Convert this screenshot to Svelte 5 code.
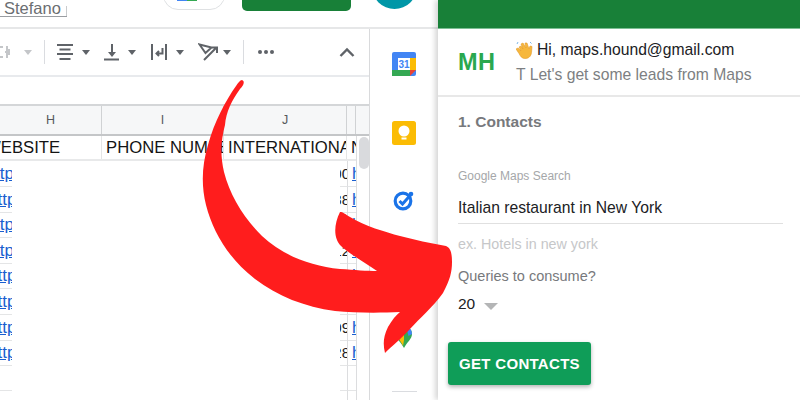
<script>
    const rows = [
        { skip: 14.5, num: '00', link: true },
        { skip: 12, num: '88', link: true },
        { skip: 14.5, num: '', link: true },
        { skip: 14.5, num: '12', link: true },
        { skip: 12, num: '', link: true },
        { skip: 12, num: '', link: true },
        { skip: 12, num: '09', link: true },
        { skip: 12, num: '28', link: true },
        { skip: 0, num: '', link: false },
        { skip: 0, num: '', link: false }
    ];
</script>

<div class="page">
    <div class="left">
        <!-- top bar of the sheet -->
        <div class="topbar">
            <span class="doc-name">Stefano</span>
            <div class="pill"></div>
            <div class="share"></div>
            <div class="avatar"></div>
        </div>

        <div class="work">
            <div class="sheet">
                <!-- toolbar -->
                <div class="toolbar">
                    <svg class="tool first" width="16" height="16" viewBox="0 0 16 16" fill="none" stroke="#c4c6c9" stroke-width="2">
                        <path d="M1 3h6M1 13h6M11 2v4h3M11 14v-4h3M9 8h5" />
                    </svg>
                    <i class="caret off"></i>
                    <i class="sep near"></i>
                    <svg class="tool" width="18" height="18" viewBox="0 0 18 18" fill="none" stroke="#5f6368" stroke-width="2">
                        <path d="M1 2h16M3.500 6.500h11M1 11h16M3.500 16h11" />
                    </svg>
                    <i class="caret"></i>
                    <svg class="tool" width="16" height="18" viewBox="0 0 16 18" fill="#5f6368">
                        <path d="M7 1h2v8h3l-4 5-4-5h3z" />
                        <rect y="15.500" width="15" height="2" />
                    </svg>
                    <i class="caret"></i>
                    <svg class="tool" width="18" height="18" viewBox="0 0 18 18" fill="none" stroke="#5f6368" stroke-width="2">
                        <path d="M2 1v16M16 1v16M12.500 5v5.500H7M9 8l-2.500 2.500L9 13" />
                    </svg>
                    <i class="caret"></i>
                    <svg class="tool" width="20" height="18" viewBox="0 0 20 18" fill="none" stroke="#5f6368" stroke-width="2">
                        <path d="M1.500 1.500l12 3-6 5.500zM6 17L18 5M13.500 4.500H19V10" />
                    </svg>
                    <i class="caret last"></i>
                    <i class="sep"></i>
                    <span class="dots"><i></i><i></i><i></i></span>
                    <svg class="chev" width="16" height="10" viewBox="0 0 16 10" fill="none" stroke="#5f6368" stroke-width="2.400">
                        <path d="M1.500 9L8 2.500 14.500 9" />
                    </svg>
                </div>

                <div class="formula"></div>

                <div class="col-heads">
                    <div class="head">H</div>
                    <div class="head">I</div>
                    <div class="head">J</div>
                    <div class="head"></div>
                    <div class="head"></div>
                </div>

                <div class="title-row">
                    <div class="t h"><span class="flip">WEBSITE</span></div>
                    <div class="t">PHONE NUMBE</div>
                    <div class="t">INTERNATIONA</div>
                    <div class="t k">N</div>
                </div>

                {#each rows as row}
                    <div class="row">
                        <div class="cell-link">
                            {#if row.link}
                                <span style="margin-left: {-row.skip}px">https://</span>
                            {/if}
                        </div>
                        <div class="cell-empty"></div>
                        <div class="cell-num"><span>{row.num}</span></div>
                        <div class="cell-h">{row.link ? 'h' : ''}</div>
                    </div>
                {/each}

                <div class="track">
                    <div class="thumb"></div>
                </div>
            </div>

            <!-- google side apps -->
            <div class="side">
                <svg class="calendar" width="24" height="24" viewBox="0 0 24 24">
                    <rect width="24" height="24" rx="2" fill="#4285f4" />
                    <rect x="6" y="6" width="12" height="12" fill="#fff" />
                    <rect x="18" y="6" width="6" height="12" fill="#fbbc04" />
                    <rect y="18" width="18" height="6" fill="#34a853" />
                    <path d="M18 18h6l-6 6z" fill="#ea4335" />
                    <text x="12" y="16" text-anchor="middle" class="cal">31</text>
                </svg>
                <svg class="keep" width="24" height="24" viewBox="0 0 24 24">
                    <rect width="24" height="24" rx="2.500" fill="#fbbc04" />
                    <circle cx="12" cy="10" r="5.500" fill="#fff" />
                    <rect x="9.500" y="16.500" width="5" height="2" fill="#fff" />
                </svg>
                <svg class="tasks" width="22" height="22" viewBox="0 0 22 22" fill="none">
                    <circle cx="10" cy="12" r="7.800" stroke="#1a73e8" stroke-width="3.200" />
                    <path d="M6.500 12l3 3L18 5.500" stroke="#1a73e8" stroke-width="3" />
                    <circle cx="18" cy="5" r="2.300" fill="#1a73e8" />
                </svg>
                <svg class="maps" width="16" height="22" viewBox="0 0 16 22">
                    <path d="M8 0a8 8 0 0 1 8 8c0 5-5 8-8 14-3-6-8-9-8-14a8 8 0 0 1 8-8z" fill="#34a853" />
                    <path d="M0 8a8 8 0 0 1 8-8l-8 10z" fill="#ea4335" />
                    <path d="M3 13l5-5v6l-1 6c-1-3-3-5-4-7z" fill="#fbbc04" />
                    <path d="M16 8l-3.500 2L11 4l2-2.500A8 8 0 0 1 16 8z" fill="#4285f4" />
                </svg>
                <i class="side-line"></i>
            </div>
        </div>
    </div>

    <!-- extension panel -->
    <div class="panel">
        <div class="panel-head"></div>

        <div class="user">
            <div class="initials">MH</div>
            <div class="greet">
                <div class="hi">
                    <svg width="17" height="18" viewBox="0 0 17 18">
                        <path d="M3 6l2-1 2 3-2-5 2-1 3 5-1-5 2 0 2 6 1-3 2 .500-.500 6c-.500 4-3 6-6.500 6-3 0-4.500-2-6-5L0 8l2-1 3 3z" fill="#f6b73c" stroke="#e49a2b" stroke-width=".600" />
                        <path d="M1 3l1-2M14 1l1.500 1.500" stroke="#7bb6e8" stroke-width="1" />
                    </svg>
                    <span>Hi, maps.hound@gmail.com</span>
                </div>
                <div class="tagline">T Let's get some leads from Maps</div>
            </div>
        </div>

        <div class="body">
            <h2>1. Contacts</h2>
            <div class="field-label">Google Maps Search</div>
            <div class="field-value">Italian restaurant in New York</div>
            <div class="hint">ex. Hotels in new york</div>
            <div class="queries">Queries to consume?</div>
            <div class="select"><span>20</span><i></i></div>
            <button>GET CONTACTS</button>
        </div>
    </div>

    <!-- big red arrow over the screenshot -->
    <svg class="arrow" width="800" height="400" viewBox="0 0 800 400">
        <path
            fill="#ff1d1d"
            d="M242 80 C245 81 244 85 240 89 C232 100 226 112 225 125 C221 140 220 155 224 172 C230 195 243 217 262 236 C282 255 310 266 340 269 C355 270 367 271 377 271 C365 263 350 254 341 246 C333 238 334 224 340 212 C343 212 345 214 350 217 C365 226 385 232 400 236 C415 240 430 243 446 246 C451 248 452 254 452 262 C452 272 450 280 443 293 C432 308 420 318 410 329 C402 338 392 346 385 353 C383 345 383 337 388 327 C392 320 396 315 400 312 C380 313 355 313 335 311 C305 307 277 296 255 279 C228 258 213 232 206 205 C201 185 202 165 208 145 C214 122 226 100 236 86 C238 83 240 80 242 80 Z"
        />
    </svg>
</div>

<style>
    :global(body) {
        margin: 0;
        background: #fff;
        font-family: "Liberation Sans", Arial, sans-serif;
    }

    .page {
        position: relative;
        display: flex;
        width: 800px;
        height: 400px;
        overflow: hidden;
    }

    .left {
        width: 438px;
        flex: none;
        display: flex;
        flex-direction: column;
    }

    .topbar {
        height: 29px;
        flex: none;
        box-sizing: border-box;
        padding-bottom: 17px;
        border-bottom: 2px solid #e6e7e8;
        display: flex;
        align-items: flex-end;
        overflow: hidden;
        position: relative;
    }

    .doc-name {
        position: absolute;
        left: 0;
        top: 0;
        width: 63px;
        padding-left: 4px;
        font-size: 16.500px;
        line-height: 16px;
        color: #6b6e72;
        border-bottom: 1px solid #9a9da1;
    }

    .doc-name::after {
        content: "";
        position: absolute;
        right: 0;
        top: 6px;
        bottom: 0;
        width: 1px;
        background: #c9cbcd;
    }

    .pill {
        position: relative;
        width: 62px;
        height: 30px;
        margin-left: 163px;
        border: 1px solid #dfe1e3;
        border-radius: 16px;
        flex: none;
        box-sizing: border-box;
    }

    .pill::after {
        content: "";
        position: absolute;
        left: 13px;
        bottom: 8px;
        width: 20px;
        height: 1px;
        background: linear-gradient(90deg, #4285f4 50%, #34a853 50%);
    }

    .share {
        width: 109px;
        height: 30px;
        margin-left: 17px;
        margin-bottom: -1px;
        background: #188038;
        border-radius: 5px;
        flex: none;
    }

    .avatar {
        width: 45px;
        height: 45px;
        margin-left: 21px;
        margin-bottom: 1px;
        background: #0097a7;
        border-radius: 50%;
        flex: none;
    }

    .work {
        flex: 1;
        display: flex;
        min-height: 0;
    }

    .sheet {
        position: relative;
        width: 370px;
        height: 371px;
        flex: none;
        box-sizing: border-box;
        border-right: 1px solid #d9dadc;
        overflow: hidden;
    }

    .toolbar {
        height: 48px;
        box-sizing: border-box;
        border-bottom: 2px solid #e8eaed;
        display: flex;
        align-items: center;
    }

    .tool {
        flex: none;
    }

    .tool.first {
        margin-left: -4px;
    }

    .caret {
        width: 0;
        height: 0;
        margin: 0 14px 0 8px;
        border: 4px solid transparent;
        border-top: 5px solid #5f6368;
        border-bottom: 0;
        flex: none;
    }

    .caret.off {
        border-top-color: #c4c6c9;
        margin: 0 12px;
    }

    .caret.last {
        margin: 0 12px 0 5px;
    }

    .sep {
        width: 1px;
        height: 24px;
        background: #dadce0;
        margin-right: 14px;
        flex: none;
    }

    .sep.near {
        margin-right: 11px;
    }

    .dots {
        display: flex;
        gap: 2px;
    }

    .dots i {
        width: 4px;
        height: 4px;
        border-radius: 50%;
        background: #5f6368;
    }

    .chev {
        margin-left: auto;
        margin-right: 14px;
    }

    .formula {
        height: 29px;
        box-sizing: border-box;
        border-bottom: 2px solid #d4d6d8;
    }

    .col-heads {
        display: grid;
        grid-template-columns: 102px 122px 123px 9px 13px;
        height: 30px;
        background: #f6f7f8;
        border-bottom: 2px solid #c4c6c8;
        box-sizing: border-box;
        font-size: 12.500px;
        color: #55585c;
    }

    .head {
        display: flex;
        align-items: center;
        justify-content: center;
        border-right: 1px solid #d0d2d4;
    }

    .head:last-child {
        border-right: 0;
    }

    .title-row {
        display: grid;
        grid-template-columns: 102px 122px 123px 23px;
        height: 25px;
        box-sizing: border-box;
        border-bottom: 2px solid #e8e9ea;
        font-size: 16.700px;
        line-height: 23px;
        color: #141414;
        white-space: nowrap;
    }

    .t {
        overflow: hidden;
        border-right: 1px solid #e4e5e6;
        padding-left: 4px;
    }

    .t.h {
        padding-left: 0;
    }

    .flip {
        margin-left: -15px;
    }

    .t.k {
        padding-left: 4px;
        border-right: 0;
    }

    .row {
        display: grid;
        grid-template-columns: 12px 328px 8px 22px;
        height: 25.600px;
        font-size: 17px;
        line-height: 25px;
    }

    .cell-link {
        overflow: hidden;
        box-sizing: border-box;
        border-bottom: 1px solid #e4e5e6;
        color: #1a5fd0;
        text-decoration: underline;
        white-space: nowrap;
    }

    .cell-num {
        display: flex;
        justify-content: flex-end;
        overflow: hidden;
        box-sizing: border-box;
        font-size: 15px;
        border-right: 1px solid #dcdddf;
        border-bottom: 1px solid #e4e5e6;
        color: #222;
        white-space: nowrap;
    }

    .cell-num span {
        margin-right: -3px;
    }

    .cell-h {
        padding-left: 4px;
        box-sizing: border-box;
        border-bottom: 1px solid #e4e5e6;
        color: #1a5fd0;
        text-decoration: underline;
    }

    .track {
        position: absolute;
        left: 356px;
        top: 107px;
        bottom: 0;
        width: 14px;
        box-sizing: border-box;
        padding: 1px 1px 0 2px;
        background: #fff;
        border-left: 1px solid #dcdddf;
    }

    .thumb {
        height: 32px;
        background: #d9dadd;
        border-radius: 5px;
    }

    .side {
        flex: 1;
        display: flex;
        flex-direction: column;
        align-items: center;
        background: #fff;
    }

    .calendar {
        margin-top: 23px;
    }

    .keep {
        margin-top: 45px;
    }

    .tasks {
        margin-top: 44px;
    }

    .maps {
        margin-top: 115px;
    }

    .side-line {
        width: 25px;
        height: 1px;
        background: #dadce0;
        margin-top: 43px;
    }

    .panel {
        flex: 1;
        display: flex;
        flex-direction: column;
        background: #fff;
        box-shadow: -3px 0 5px rgba(0, 0, 0, 0.16);
        z-index: 1;
    }

    .panel-head {
        height: 28px;
        background: #188038;
        border-bottom: 1px solid #7cbf94;
        flex: none;
    }

    .user {
        height: 68px;
        flex: none;
        box-sizing: border-box;
        border-bottom: 2px solid #e8e8e8;
        display: flex;
        align-items: center;
        padding-left: 20px;
    }

    .initials {
        width: 58px;
        font-size: 23.500px;
        font-weight: 700;
        letter-spacing: 0.500px;
        color: #2aa84f;
        padding-top: 1px;
    }

    .greet {
        display: flex;
        flex-direction: column;
        gap: 7px;
        padding-top: 1px;
    }

    .hi {
        display: flex;
        align-items: center;
        gap: 4px;
        font-size: 15.700px;
        line-height: 18px;
        color: #202124;
    }

    .tagline {
        font-size: 15.700px;
        line-height: 18px;
        color: #7d7f82;
    }

    .body {
        padding: 16px 17px 0 20px;
    }

    h2 {
        margin: 0;
        font-size: 15.500px;
        line-height: 18px;
        font-weight: 700;
        color: #77797c;
    }

    .field-label {
        margin-top: 38px;
        font-size: 12px;
        line-height: 14px;
        color: #a5a7a9;
    }

    .field-value {
        margin-top: 14px;
        height: 27px;
        font-size: 15.700px;
        line-height: 22px;
        color: #202124;
        border-bottom: 1px solid #e0e0e0;
        box-sizing: border-box;
    }

    .hint {
        margin-top: 12px;
        font-size: 14.300px;
        line-height: 16px;
        color: #c6c7c9;
    }

    .queries {
        margin-top: 16px;
        font-size: 14.500px;
        line-height: 17px;
        color: #77797c;
    }

    .select {
        margin-top: 10px;
        display: flex;
        align-items: center;
        gap: 9px;
        font-size: 15.500px;
        line-height: 18px;
        color: #202124;
    }

    .select i {
        width: 0;
        height: 0;
        margin-top: 4px;
        border: 7px solid transparent;
        border-top: 7px solid #b4b5b6;
        border-bottom: 0;
    }

    button {
        display: block;
        margin: 29px 0 0 -10px;
        width: 143px;
        height: 43px;
        padding: 0;
        border: 0;
        border-radius: 3px;
        background: #0f9d58;
        color: #fff;
        font: 700 15px "Liberation Sans", Arial, sans-serif;
        letter-spacing: 0.300px;
        box-shadow: 0 2px 4px rgba(0, 0, 0, 0.3);
    }

    .arrow {
        position: absolute;
        left: 0;
        top: 0;
        z-index: 2;
        pointer-events: none;
    }

    .cal {
        font: 700 10px "Liberation Sans", Arial, sans-serif;
        fill: #4285f4;
    }
</style>
